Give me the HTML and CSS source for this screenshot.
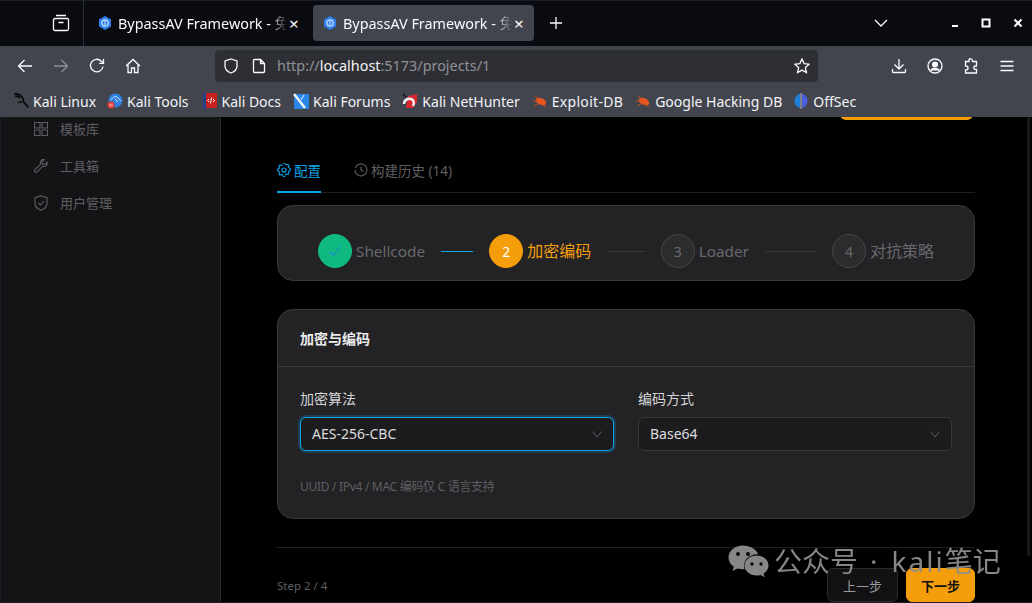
FILE: index.html
```html
<!DOCTYPE html>
<html>
<head>
  <title>BypassAV Framework</title>
  <link rel="stylesheet" href="styles.css">
</head>
<body>
  <div class="window">
    <div class="tabbar">
      <div class="tab-tools">
        <svg class="ico" width="18" height="18" viewBox="0 0 18 18"><path d="M4 1.500h10M1.500 6a1.500 1.500 0 0 1 1.500-1.500h12A1.500 1.500 0 0 1 16.500 6v9a1.500 1.500 0 0 1-1.500 1.500H3A1.500 1.500 0 0 1 1.500 15zM6.500 8.500h5"/></svg>
      </div>
      <div class="tab">
        <svg class="favicon" width="14" height="14" viewBox="0 0 14 14"><path fill="#2f80ed" d="M7 0l6 3.500v7L7 14l-6-3.500v-7z"/><circle cx="7" cy="7" r="3.200" fill="none" stroke="#cfe3ff" stroke-width="1.200"/><path d="M7 4.500v5" stroke="#cfe3ff"/></svg>
        <span class="tab-title">BypassAV Framework - 免费</span>
        <span class="tab-close">×</span>
      </div>
      <div class="tab active">
        <svg class="favicon" width="14" height="14" viewBox="0 0 14 14"><path fill="#2f80ed" d="M7 0l6 3.500v7L7 14l-6-3.500v-7z"/><circle cx="7" cy="7" r="3.200" fill="none" stroke="#cfe3ff" stroke-width="1.200"/><path d="M7 4.500v5" stroke="#cfe3ff"/></svg>
        <span class="tab-title">BypassAV Framework - 免费</span>
        <span class="tab-close">×</span>
      </div>
      <svg class="ico new-tab" width="14" height="14" viewBox="0 0 14 14"><path d="M7 1v12M1 7h12"/></svg>
      <div class="tabbar-right">
        <svg class="ico" width="14" height="8" viewBox="0 0 14 8"><path d="M1 1l6 6 6-6"/></svg>
        <div class="win-btns">
          <svg width="8" height="8" viewBox="0 0 8 8"><path d="M1 7h6" stroke="#fff" stroke-width="2"/></svg>
          <svg width="10" height="10" viewBox="0 0 10 10"><rect x="1.500" y="1.500" width="7" height="7" fill="none" stroke="#fff" stroke-width="2"/></svg>
          <svg width="10" height="10" viewBox="0 0 10 10"><path d="M1.500 1.500l7 7M8.500 1.500l-7 7" stroke="#fff" stroke-width="2"/></svg>
        </div>
      </div>
    </div>

    <div class="toolbar">
      <div class="nav-btns">
        <svg class="ico" width="16" height="16" viewBox="0 0 16 16"><path d="M15 8H1.500M7.500 2L1.500 8l6 6"/></svg>
        <svg class="ico dim" width="16" height="16" viewBox="0 0 16 16"><path d="M1 8h13.500M8.500 2l6 6-6 6"/></svg>
        <svg class="ico" width="16" height="16" viewBox="0 0 16 16"><path d="M14 8.500A6.300 6.300 0 1 1 12.300 3.200L14.300 5M14.500 1v4.300h-4.300"/></svg>
        <svg class="ico" width="16" height="16" viewBox="0 0 16 16"><path d="M1 8l7-6.500L15 8M3 6.500v8h3.500v-4.500h3v4.500H13v-8"/></svg>
      </div>
      <div class="urlbar">
        <svg class="ico" width="16" height="16" viewBox="0 0 16 16"><path d="M8 1l6 2v5c0 3.500-2.500 5.700-6 7-3.500-1.300-6-3.500-6-7V3z"/></svg>
        <svg class="ico" width="14" height="16" viewBox="0 0 14 16"><path d="M2.500 1.500h6l4 4v8a1 1 0 0 1-1 1h-9a1 1 0 0 1-1-1v-11a1 1 0 0 1 1-1zM8.500 1.500v4h4"/></svg>
        <span class="url">http://<b>localhost</b>:5173/projects/1</span>
        <svg class="ico star" width="16" height="16" viewBox="0 0 16 16"><path d="M8 1l2.100 4.600 5 .6-3.700 3.400 1 5L8 12.100l-4.400 2.500 1-5L.9 6.200l5-.6z"/></svg>
      </div>
      <div class="tool-btns">
        <svg class="ico" width="16" height="16" viewBox="0 0 16 16"><path d="M8 1v9.500M3.500 6.500L8 11l4.500-4.500M1.500 11v2.500a1 1 0 0 0 1 1h11a1 1 0 0 0 1-1V11"/></svg>
        <svg class="ico" width="16" height="16" viewBox="0 0 16 16"><circle cx="8" cy="8" r="7"/><circle cx="8" cy="6.500" r="2.400" fill="#fbfbfe"/><path d="M3.500 12.500c1-1.500 2.500-2 4.500-2s3.500.5 4.500 2" fill="#fbfbfe"/></svg>
        <svg class="ico" width="16" height="16" viewBox="0 0 16 16"><path d="M6 1.500a2 2 0 0 1 3.500 1.500v.5h4v4.500h-1a1.700 1.700 0 0 0 0 3.500h1v3.500H2.500v-3h.5a2 2 0 0 0 0-4h-.5v-4.500h3.500V3c0-.6 0-1 0-1.500z"/></svg>
        <svg class="ico" width="16" height="16" viewBox="0 0 16 16"><path d="M1.500 3.500h13M1.500 8h13M1.500 12.500h13"/></svg>
      </div>
    </div>

    <div class="bookmarks">
      <div class="mark">
        <svg width="16" height="16" viewBox="0 0 16 16"><path d="M1 1c3-.5 6 .5 8 3 1.500 2 1 4 2 5.500s2.500 2 4 5M2 3c2 0 4 .5 5 2M9 9c-1.500-.5-3-.2-4 1" fill="none" stroke="#08080a" stroke-width="1.700"/></svg>
        <span>Kali Linux</span>
      </div>
      <div class="mark">
        <svg width="16" height="16" viewBox="0 0 16 16"><circle cx="8.500" cy="7.500" r="7" fill="#2f7fe0"/><path d="M4 7c2-3 4-4 6-3l4 4M8 6l3 3" fill="none" stroke="#cfe4fb"/><circle cx="4" cy="12" r="3.500" fill="#e5342b"/><path d="M3 10.500v3M5 10.500v3" stroke="#fff" stroke-width=".8"/></svg>
        <span>Kali Tools</span>
      </div>
      <div class="mark">
        <svg width="16" height="16" viewBox="0 0 16 16"><rect x="1" y="0" width="14" height="15" rx="1" fill="#c8201f"/><rect x="1" y="0" width="3" height="16" fill="#26418a"/><path d="M7 6L5.500 7.500 7 9M11 6l1.500 1.500L11 9M9.500 4.500l-1 6" fill="none" stroke="#fff"/></svg>
        <span>Kali Docs</span>
      </div>
      <div class="mark">
        <svg width="16" height="16" viewBox="0 0 16 16"><rect x="1" y="1" width="15" height="15" rx="1" fill="#2a86e8"/><path d="M1 1l11 14" stroke="#eef2f6" stroke-width="2.400"/><path d="M11 2l-3 5" stroke="#eef2f6"/></svg>
        <span>Kali Forums</span>
      </div>
      <div class="mark">
        <svg width="16" height="16" viewBox="0 0 16 16"><path d="M6 3l9-2v8l-4 6H4z" fill="#d9272e"/><path d="M2 11c0-4 4-6 7-5s3.500 4 2 7" fill="none" stroke="#f1f1f3" stroke-width="2.400"/><path d="M1 1l3 3" stroke="#111" stroke-width="1.500"/></svg>
        <span>Kali NetHunter</span>
      </div>
      <div class="mark">
        <svg width="16" height="16" viewBox="0 0 16 16"><ellipse cx="9" cy="8.500" rx="5.500" ry="3.200" transform="rotate(25 9 8.500)" fill="#e8551e"/><path d="M1 8h4M3 3l4 3M2 13l4-2M11 12l3 2" stroke="#c8541f"/></svg>
        <span class="wide">Exploit-DB</span>
      </div>
      <div class="mark">
        <svg width="16" height="16" viewBox="0 0 16 16"><ellipse cx="9" cy="8.500" rx="5.500" ry="3.200" transform="rotate(25 9 8.500)" fill="#e8551e"/><path d="M1 8h4M3 3l4 3M2 13l4-2M11 12l3 2" stroke="#c8541f"/></svg>
        <span>Google Hacking DB</span>
      </div>
      <div class="mark">
        <svg width="16" height="16" viewBox="0 0 15 16"><path d="M6.500 1C3 1.500 1 4.500 1 8s2 6 5.500 7z" fill="#1f7fd6"/><path d="M8.500 1C12 1.500 14 4.500 14 8s-2 6-5.500 7z" fill="#4a5fe0"/><path d="M7.500 0v16" stroke="#d8dce4" stroke-width=".8"/></svg>
        <span>OffSec</span>
      </div>
    </div>

    <div class="app">
      <aside class="sidebar">
        <div class="side-item">
          <svg class="side-ico" width="14" height="14" viewBox="0 0 14 14"><path d="M.500.500h5.500v5.500H.500zM8 .500h5.500v5.500H8zM.500 8h5.500v5.500H.500zM8 8h5.500v5.500H8z"/></svg>
          模板库
        </div>
        <div class="side-item">
          <svg class="side-ico" width="14" height="14" viewBox="0 0 14 14"><path d="M13 3.200l-2.300 2.300-2.200-.5-.5-2.200L10.300.500C8.300 0 6.200 1.500 6.300 3.700c0 .6.100 1 .3 1.400L1 10.700c-.7.700-.7 1.600-.1 2.200s1.500.6 2.200-.1l5.600-5.600c2.300 1 5.300-1 4.300-4z"/></svg>
          工具箱
        </div>
        <div class="side-item">
          <svg class="side-ico" width="14" height="16" viewBox="0 0 14 16"><path d="M7 .700l6 2v5.500c0 3.300-2.500 5.700-6 7-3.500-1.300-6-3.700-6-7V2.700zM4.500 8l2 2 3.300-3.800"/></svg>
          用户管理
        </div>
      </aside>

      <main class="content">
        <div class="top-row">
          <span class="top-btn"></span>
        </div>

        <div class="tabs">
          <div class="page-tab on">
            <svg class="tab-ico" width="14" height="14" viewBox="0 0 24 24"><path d="M10.300 2.800a2 2 0 0 1 3.400 0l.7 1.200a2 2 0 0 0 2.100 1l1.400-.3a2 2 0 0 1 2.400 2.400l-.3 1.400a2 2 0 0 0 1 2.100l1.200.7a2 2 0 0 1 0 3.400l-1.200.7a2 2 0 0 0-1 2.100l.3 1.400a2 2 0 0 1-2.400 2.400l-1.400-.3a2 2 0 0 0-2.100 1l-.7 1.200" transform="translate(0 -2)" /><path d="M13.700 21.200a2 2 0 0 1-3.400 0l-.7-1.200a2 2 0 0 0-2.100-1l-1.400.3a2 2 0 0 1-2.400-2.400l.3-1.400a2 2 0 0 0-1-2.100L1.800 12.700a2 2 0 0 1 0-3.400L3 8.600a2 2 0 0 0 1-2.100L3.700 5.100a2 2 0 0 1 2.400-2.400l1.400.3a2 2 0 0 0 2.100-1" transform="translate(0 1)" /><circle cx="12" cy="12" r="3.500"/></svg>
            配置
          </div>
          <div class="page-tab">
            <svg class="tab-ico" width="14" height="14" viewBox="0 0 14 14"><path d="M1.300 5A6 6 0 1 1 1 7M7 3.500V7l2.500 1.500"/></svg>
            构建历史 (14)
          </div>
        </div>

        <div class="steps">
          <div class="step done">
            <span class="dot"><svg width="14" height="14" viewBox="0 0 14 14"><path d="M1.500 7.500l4 4 7-9" fill="none" stroke="#1a8fc4" stroke-width="1.200"/></svg></span>
            <span class="step-name latin">Shellcode</span>
            <span class="step-line"></span>
          </div>
          <div class="step current">
            <span class="dot">2</span>
            <span class="step-name">加密编码</span>
            <span class="step-line"></span>
          </div>
          <div class="step">
            <span class="dot">3</span>
            <span class="step-name latin">Loader</span>
            <span class="step-line"></span>
          </div>
          <div class="step last">
            <span class="dot">4</span>
            <span class="step-name">对抗策略</span>
          </div>
        </div>

        <section class="card">
          <div class="card-head">加密与编码</div>
          <div class="card-body">
            <div class="fields">
              <div class="field">
                <label>加密算法</label>
                <div class="select focus"><span>AES-256-CBC</span>
                  <svg width="10" height="7" viewBox="0 0 10 7"><path d="M.500.500L5 6 9.500.500"/></svg>
                </div>
              </div>
              <div class="field">
                <label>编码方式</label>
                <div class="select"><span>Base64</span>
                  <svg width="10" height="7" viewBox="0 0 10 7"><path d="M.500.500L5 6 9.500.500"/></svg>
                </div>
              </div>
            </div>
            <p class="hint">UUID / IPv4 / MAC 编码仅 C 语言支持</p>
          </div>
        </section>

        <div class="foot">
          <span class="step-count">Step 2 / 4</span>
          <div class="foot-btns">
            <button class="btn">上一步</button>
            <button class="btn primary">下一步</button>
          </div>
        </div>

        <div class="thumb"></div>
      </main>
    </div>

    <div class="watermark">
      <svg width="41" height="33" viewBox="0 0 41 33"><path fill="#8e8e8e" d="M15 .500C6.900.500.500 5.800.500 12.500c0 3.800 2.100 7.100 5.300 9.300L4.600 26l4.900-2.500c1.700.5 3.500.8 5.500.8.600 0 1.100 0 1.600-.1-.4-1.200-.6-2.400-.6-3.700 0-6.300 5.900-11.300 13.200-11.300h1C28.200 4.100 22.200.500 15 .500z"/><path fill="#8e8e8e" d="M40.500 20.500c0-5.500-5.400-10-12-10s-12 4.500-12 10 5.400 10 12 10c1.400 0 2.700-.2 4-.6l4.200 2.400-1.100-3.700c2.900-1.800 4.900-4.800 4.900-8.100z"/><circle cx="10" cy="9" r="2" fill="#0a0a0a"/><circle cx="20" cy="9" r="2" fill="#0a0a0a"/><circle cx="24" cy="19" r="1.700" fill="#0a0a0a"/><circle cx="33" cy="19" r="1.700" fill="#0a0a0a"/></svg>
      <span>公众号<i class="mid-dot">·</i><i class="kali">kali</i>笔记</span>
    </div>
  </div>
</body>
</html>
```

FILE: styles.css
```css
*, *::before, *::after {
  box-sizing: border-box;
}

body {
  margin: 0;
  font-family: "Noto Sans", "Noto Sans CJK SC", sans-serif;
  background: #000;
}

.window {
  position: relative;
  width: 1032px;
  height: 603px;
  display: flex;
  flex-direction: column;
  overflow: hidden;
}

.ico {
  fill: none;
  stroke: #fbfbfe;
  stroke-width: 1.300;
  flex: none;
}

.ico.dim {
  opacity: 0.4;
}

/* tab strip */
.tabbar {
  height: 46px;
  flex: none;
  display: flex;
  align-items: center;
  padding-bottom: 1px;
  background: #0a0b10;
  border-top: 1px solid #1c1e26;
  color: #fbfbfe;
}

.tab-tools {
  width: 84px;
  height: 45px;
  flex: none;
  display: flex;
  align-items: center;
  justify-content: flex-end;
  padding-right: 13px;
  border-right: 1px solid #2c2e35;
}

.tab {
  width: 221px;
  height: 36px;
  margin-left: 4px;
  padding: 0 8px 0 10px;
  display: flex;
  align-items: center;
  gap: 6px;
  border-radius: 4px;
  flex: none;
}

.tab.active {
  background: #42454e;
}

.favicon {
  flex: none;
}

.tab-title {
  flex: 1;
  min-width: 0;
  margin-bottom: 2px;
  font-size: 14.4px;
  white-space: nowrap;
  overflow: hidden;
  -webkit-mask-image: linear-gradient(to right, #000 90%, transparent);
  mask-image: linear-gradient(to right, #000 90%, transparent);
}

.tab-close {
  font-size: 17px;
  line-height: 1;
  width: 12px;
  margin-left: -4px;
}

.new-tab {
  margin-left: 15px;
}

.tabbar-right {
  margin-left: auto;
  display: flex;
  align-items: center;
}

.win-btns {
  display: flex;
  align-items: center;
  gap: 22px;
  margin-left: 63px;
  margin-right: 9px;
}

/* toolbar */
.toolbar {
  height: 39px;
  flex: none;
  background: #42454e;
  display: flex;
  align-items: center;
}

.nav-btns {
  width: 215px;
  padding-left: 17px;
  display: flex;
  gap: 20px;
  align-items: center;
}

.urlbar {
  width: 603px;
  height: 32px;
  background: #2e2f34;
  border-radius: 4px;
  display: flex;
  align-items: center;
  padding: 0 8px;
  gap: 13px;
}

.url {
  font-size: 14.4px;
  color: #8f9198;
  flex: 1;
  margin-left: -2px;
}

.url b {
  font-weight: normal;
  color: #f2f2f5;
}

.tool-btns {
  flex: 1;
  display: flex;
  justify-content: flex-end;
  gap: 20px;
  padding-right: 17px;
}

/* bookmarks */
.bookmarks {
  height: 32px;
  flex: none;
  background: #42454e;
  display: flex;
  align-items: center;
  padding-left: 13px;
  gap: 12px;
  color: #f3f3f6;
  font-size: 14px;
}

.mark {
  display: flex;
  align-items: center;
  gap: 4px;
  white-space: nowrap;
}

.mark:nth-child(1) {
  margin-right: -1px;
}

.mark:nth-child(2) {
  margin-right: 1px;
}

.mark:nth-child(7) {
  margin-right: -1px;
}

.mark .wide {
  letter-spacing: 0.3px;
}

/* app */
.app {
  flex: 1;
  min-height: 0;
  display: flex;
  border-bottom: 1px solid #1c1e26;
  border-left: 1px solid #1c1e26;
}

.sidebar {
  width: 220px;
  flex: none;
  background: #141417;
  border-right: 1px solid #2b2b2e;
  padding: 0 33px;
  overflow: hidden;
}

.side-item {
  height: 37px;
  display: flex;
  align-items: center;
  gap: 12px;
  font-size: 13px;
  color: #5f5f63;
}

.side-item:first-child {
  margin-top: -7px;
}

.side-ico {
  fill: none;
  stroke: #5f5f63;
  stroke-width: 1.100;
  flex: none;
  width: 14px;
}

.content {
  position: relative;
  flex: 1;
  background: #000;
  padding: 0 57px 0 56px;
  overflow: hidden;
}

.top-row {
  display: flex;
  justify-content: flex-end;
  margin-top: -31px;
  padding-right: 2px;
}

.top-btn {
  width: 133px;
  height: 34px;
  background: #f59e0b;
  border-radius: 6px;
}

/* page tabs */
.tabs {
  display: flex;
  gap: 33px;
  margin-top: 30px;
  border-bottom: 1px solid #1f1f21;
}

.page-tab {
  height: 43px;
  display: flex;
  align-items: center;
  gap: 3px;
  padding-bottom: 2px;
  font-size: 13.5px;
  color: #5f5f63;
  border-bottom: 2px solid transparent;
  margin-bottom: -1px;
}

.page-tab.on {
  color: #0ea5e9;
  border-bottom-color: #0ea5e9;
}

.tab-ico {
  fill: none;
  stroke: currentColor;
  stroke-width: 1.100;
}

.page-tab.on .tab-ico {
  stroke-width: 2;
}

/* stepper */
.steps {
  margin-top: 12px;
  height: 76px;
  padding: 28px 40px 12px;
  background: #232325;
  border: 1px solid #39393c;
  border-radius: 16px;
  display: flex;
}

.step {
  flex: 1;
  display: flex;
  align-items: center;
  height: 34px;
}

.step.last {
  flex: none;
  width: 102px;
}

.dot {
  width: 34px;
  height: 34px;
  flex: none;
  border-radius: 50%;
  display: flex;
  align-items: center;
  justify-content: center;
  font-size: 14px;
  color: #68686c;
  background: #2c2c2f;
  border: 1px solid #47474a;
}

.step-name {
  margin-left: 4px;
  margin-bottom: 2px;
  font-size: 16px;
  color: #68686c;
  white-space: nowrap;
}

.step-name.latin {
  font-size: 15.3px;
  margin-bottom: 0;
}

.step-line {
  flex: 1;
  height: 1px;
  margin: 0 16px;
  background: #39393c;
}

.step.done .dot {
  background: #10b981;
  border-color: #10b981;
}

.step.done .step-line {
  background: #0ea5e9;
}

.step.current .dot {
  background: #f59e0b;
  border-color: #f59e0b;
  color: #fff;
}

.step.current .step-name {
  color: #f59e0b;
}

/* form card */
.card {
  margin-top: 28px;
  height: 210px;
  background: #232325;
  border: 1px solid #39393c;
  border-radius: 16px;
}

.card-head {
  height: 57px;
  padding: 0 22px;
  display: flex;
  align-items: center;
  font-size: 14px;
  font-weight: 700;
  color: #ececee;
  border-bottom: 1px solid #39393c;
}

.card-body {
  padding: 22px 22px 0;
}

.fields {
  display: grid;
  grid-template-columns: 314px 314px;
  gap: 24px;
}

.field label {
  display: block;
  font-size: 14px;
  line-height: 20px;
  color: #d4d4d6;
  margin-bottom: 8px;
}

.select {
  height: 34px;
  padding: 0 11px;
  display: flex;
  align-items: center;
  justify-content: space-between;
  font-size: 14px;
  color: #dcdcde;
  background: #1c1c1f;
  border: 1px solid #39393c;
  border-radius: 6px;
}

.select span {
  margin-bottom: 2px;
}

.select svg {
  fill: none;
  stroke: #5f5f63;
}

.select.focus {
  border-color: #0ea5e9;
  box-shadow: 0 0 0 2px rgba(14, 165, 233, 0.22);
}

.hint {
  margin: 27px 0 0;
  font-size: 12px;
  line-height: 18px;
  letter-spacing: -0.3px;
  color: #5f5f63;
}

/* footer */
.foot {
  margin-top: 28px;
  padding-top: 20px;
  border-top: 1px solid #1f1f21;
  display: flex;
  justify-content: space-between;
  align-items: center;
}

.step-count {
  font-size: 11.5px;
  color: #5f5f63;
}

.foot-btns {
  display: flex;
  gap: 8px;
}

.btn {
  height: 34px;
  width: 71px;
  font: inherit;
  font-size: 13px;
  color: #9a9a9e;
  background: #121214;
  border: 1px solid #2c2c2f;
  border-radius: 6px;
}

.btn.primary {
  width: 69px;
  color: #111;
  font-weight: 700;
  background: #f59e0b;
  border-color: #f59e0b;
}

.thumb {
  position: absolute;
  top: 0;
  right: 2px;
  width: 3px;
  height: 439px;
  background: #1a1a1c;
  border-radius: 2px;
}

/* image watermark sits over the page */
.watermark {
  position: absolute;
  left: 728px;
  top: 544px;
  display: flex;
  align-items: center;
  gap: 5px;
  font-size: 28px;
  line-height: 34px;
  color: #8e8e8e;
  white-space: nowrap;
  opacity: 0.95;
}

.watermark i {
  font-style: normal;
}

.mid-dot {
  margin: 0 14px 0 12px;
}

.kali {
  letter-spacing: 2px;
}
```
